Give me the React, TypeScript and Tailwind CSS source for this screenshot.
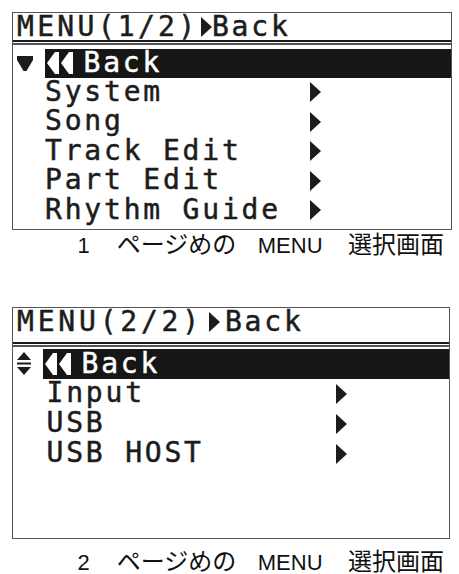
const mono =
  "font-['DejaVu_Sans_Mono',monospace] text-[28px] text-[#1c1c1c] whitespace-pre [-webkit-text-stroke:0.5px_currentColor]";

function RightTri({ className = '' }: { className?: string }) {
  return (
    <svg width="11" height="20" viewBox="0 0 11 20" className={className}>
      <polygon points="0,0 11,10 0,20" fill="#1c1c1c" />
    </svg>
  );
}

function DownMark() {
  return (
    <svg width="16" height="15" viewBox="0 0 16 15">
      <polygon points="0,0 16,0 16,4 9.5,15 6.5,15 0,4" fill="#1c1c1c" />
    </svg>
  );
}

function UpDownMark() {
  return (
    <svg width="14" height="23" viewBox="0 0 14 23">
      <polygon points="7,0 14,8 0,8" fill="#1c1c1c" />
      <rect x="0" y="10.5" width="14" height="2" fill="#1c1c1c" />
      <polygon points="0,15 14,15 7,23" fill="#1c1c1c" />
    </svg>
  );
}

function BackMark() {
  return (
    <svg width="28" height="22" viewBox="0 0 28 22">
      <polygon points="0,11 8,0 12,0 12,22 8,22" fill="#fff" />
      <polygon points="14,11 22,0 26,0 26,22 22,22" fill="#fff" />
    </svg>
  );
}

type Item = { label: string; arrow?: boolean };

function MenuRow({
  item,
  selected,
  mark,
  leftW,
  textPl,
  arrowAt,
  rowH,
}: {
  item: Item;
  selected?: boolean;
  mark?: React.ReactNode;
  leftW: string;
  textPl: string;
  arrowAt: string;
  rowH: string;
}) {
  return (
    <div className={`flex ${rowH}`}>
      <div className={`${leftW} shrink-0 flex items-center pl-[3.5px]`}>{mark}</div>
      <div className={`flex-1 flex items-center ${selected ? 'bg-[#161616]' : ''}`}>
        {selected ? (
          <div className="flex items-center pl-[2px]">
            <BackMark />
            <span className={`${mono} tracking-[2.8px] leading-[28px] text-white ml-[9px]`}>Back</span>
          </div>
        ) : (
          <>
            <div className={`${arrowAt} shrink-0 ${textPl}`}>
              <span className={`${mono} tracking-[2.8px] leading-[28px]`}>{item.label}</span>
            </div>
            {item.arrow && <RightTri />}
          </>
        )}
      </div>
    </div>
  );
}

function Caption({ num }: { num: string }) {
  return (
    <div className="flex items-baseline h-[22px] leading-[22px] text-[#111]">
      <span className="ml-[65.5px] font-['Liberation_Sans',sans-serif] text-[22px]">{num}</span>
      <span className="ml-[27px] font-['Noto_Sans_CJK_JP',sans-serif] text-[24px]">ページめの</span>
      <span className="ml-[21.5px] font-['Liberation_Sans',sans-serif] text-[22px]">MENU</span>
      <span className="ml-[25.5px] font-['Noto_Sans_CJK_JP',sans-serif] text-[24px]">選択画面</span>
    </div>
  );
}

const page1: Item[] = [
  { label: 'System', arrow: true },
  { label: 'Song', arrow: true },
  { label: 'Track Edit', arrow: true },
  { label: 'Part Edit', arrow: true },
  { label: 'Rhythm Guide', arrow: true },
];

const page2: Item[] = [
  { label: 'Input', arrow: true },
  { label: 'USB', arrow: true },
  { label: 'USB HOST', arrow: true },
];

export default function App() {
  return (
    <div className="w-[459px] h-[574px] bg-white pt-[12px] pl-[12px] overflow-hidden">
      {/* page 1 */}
      <div className="w-[440px] h-[218px] border-[1.5px] border-[#555] flex flex-col">
        <div className="h-[26.5px] flex items-start pl-[4px] pt-[1px]">
          <span className={`${mono} tracking-[3.3px] leading-[26px]`}>MENU(1/2)</span>
          <RightTri className="ml-[2.5px] mt-[3px]" />
          <span className={`${mono} tracking-[2.8px] leading-[26px]`}>Back</span>
        </div>
        <div className="h-[2.5px] bg-[#1c1c1c]" />
        <div className="mt-[1px] h-[1.5px] bg-[#555]" />
        <div className="mt-[4px]">
          <MenuRow
            item={{ label: 'Back' }}
            selected
            mark={<DownMark />}
            leftW="w-[31.5px]"
            textPl="pl-[0.5px]"
            arrowAt="w-[265px]"
            rowH="h-[29px]"
          />
          {page1.map((it) => (
            <MenuRow
              key={it.label}
              item={it}
              leftW="w-[31.5px]"
              textPl="pl-[0.5px]"
              arrowAt="w-[265px]"
              rowH="h-[29.5px]"
            />
          ))}
        </div>
      </div>
      <div className="mt-[2px]">
        <Caption num="1" />
      </div>

      {/* page 2 */}
      <div className="mt-[53px] w-[438px] h-[232px] border-[1.5px] border-[#555] flex flex-col">
        <div className="h-[33.5px] flex items-start pl-[4px] pt-[1px]">
          <span className={`${mono} tracking-[3.8px] leading-[26px]`}>MENU(2/2)</span>
          <RightTri className="ml-[6px] mt-[3px]" />
          <span className={`${mono} tracking-[2.8px] leading-[26px] ml-[5px]`}>Back</span>
        </div>
        <div className="h-[2.5px] bg-[#1c1c1c]" />
        <div className="mt-[1px] h-[1.5px] bg-[#555]" />
        <div className="mt-[2px]">
          <MenuRow
            item={{ label: 'Back' }}
            selected
            mark={<UpDownMark />}
            leftW="w-[29.5px]"
            textPl="pl-[4px]"
            arrowAt="w-[293px]"
            rowH="h-[30px]"
          />
          {page2.map((it) => (
            <MenuRow
              key={it.label}
              item={it}
              leftW="w-[29.5px]"
              textPl="pl-[4px]"
              arrowAt="w-[293px]"
              rowH="h-[30px]"
            />
          ))}
        </div>
      </div>
      <div className="mt-[10px]">
        <Caption num="2" />
      </div>
    </div>
  );
}
